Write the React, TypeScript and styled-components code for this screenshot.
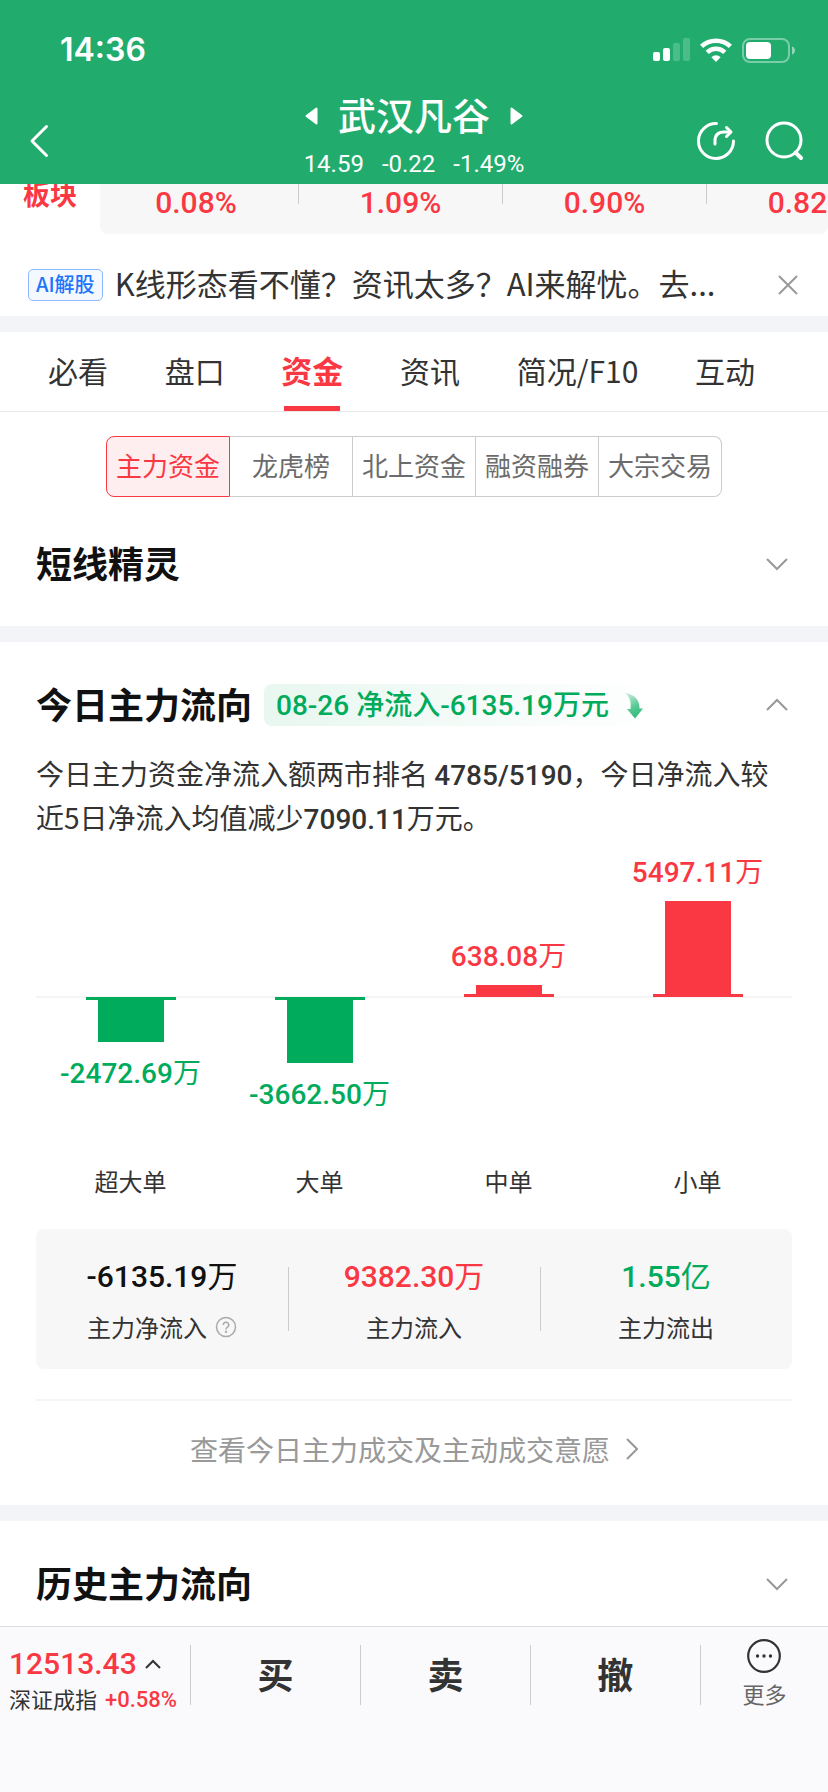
import React from "react";
import styled, { createGlobalStyle } from "styled-components";

const RED = "#fa3843";
const GREEN = "#00ab5c";
const SANS = `"Noto Sans CJK SC", sans-serif`;
const DIGITS = `Roboto, "Noto Sans CJK SC", sans-serif`;

const GlobalStyle = createGlobalStyle`
  * { box-sizing: border-box; }
  body { margin: 0; background: #fff; font-family: ${SANS}; color: #333; }
  button { margin: 0; padding: 0; border: 0; background: none; font: inherit; color: inherit; cursor: pointer; }
  h1, h2, p, dl, dd, dt, ul { margin: 0; padding: 0; font-weight: inherit; font-size: inherit; }
  a { color: inherit; text-decoration: none; }
  svg { display: block; flex: none; }
`;

const Page = styled.div`
  display: flex;
  flex-direction: column;
  min-height: 100vh;
`;

const Main = styled.main`
  flex: 1;
  background: #fff;
`;

/* header */

const Header = styled.header`
  background: #21ac6e;
  color: #fff;
`;

const StatusBar = styled.div`
  display: flex;
  align-items: center;
  justify-content: space-between;
  height: 92px;
  padding: 8px 32px 0 60px;
`;

const Clock = styled.time`
  font: 600 32px/40px Inter, sans-serif;
`;

const StatusIcons = styled.div`
  display: flex;
  align-items: center;
  gap: 10px;
`;

const NavBar = styled.nav`
  display: grid;
  grid-template-columns: 1fr auto 1fr;
  height: 92px;
`;

const NavSide = styled.div<{ $end?: boolean }>`
  display: flex;
  align-items: center;
  justify-content: ${(p) => (p.$end ? "flex-end" : "flex-start")};
  gap: 28px;
  padding: 6px 24px 0 28px;
`;

const Stock = styled.div`
  display: flex;
  flex-direction: column;
  align-items: center;
  gap: 10px;
`;

const StockTitle = styled.div`
  display: flex;
  align-items: center;
  gap: 20px;
`;

const StockName = styled.h1`
  padding-bottom: 4px;
  font-size: 38px;
  font-weight: 500;
  line-height: 44px;
`;

const Quote = styled.div`
  display: flex;
  gap: 18px;
  font: 400 24px/28px ${DIGITS};
`;

/* sector strip */

const SectorStrip = styled.section`
  display: flex;
  align-items: flex-end;
  height: 50px;
  overflow: hidden;
`;

const SectorName = styled.h2`
  flex: none;
  width: 100px;
  padding-bottom: 26px;
  text-align: center;
  font-size: 27px;
  font-weight: 700;
  line-height: 28px;
  color: ${RED};
`;

const SectorList = styled.ul`
  display: flex;
  flex: 1;
  min-width: 0;
  height: 50px;
  overflow: hidden;
  border-radius: 0 0 8px 8px;
  background: #f7f7f7;
  list-style: none;
`;

const SectorItem = styled.li`
  flex: none;
  width: 204px;
  height: 20px;
  border-left: 1px solid #ccc;
  text-align: center;
  font: 500 30px/38px ${DIGITS};
  color: ${RED};

  &:first-child {
    width: 198px;
    padding-right: 6px;
    border-left: 0;
  }
`;

/* AI tip */

const Tip = styled.section`
  display: flex;
  align-items: center;
  height: 82px;
  padding: 20px 30px 0 28px;
`;

const TipTag = styled.span`
  flex: none;
  height: 32px;
  padding: 0 7px;
  border: 1px solid #8fb8ff;
  border-radius: 5px;
  background: #f4f8ff;
  font-size: 20px;
  font-weight: 500;
  line-height: 28px;
  color: #2074fc;
`;

const TipText = styled.p`
  flex: 1;
  min-width: 0;
  margin-left: 12px;
  padding-bottom: 4px;
  font-size: 31px;
  line-height: 40px;
  white-space: nowrap;
`;

const Band = styled.div`
  height: 16px;
  background: #f3f4f8;
`;

/* tabs */

const Tabs = styled.div`
  display: flex;
  justify-content: space-between;
  height: 80px;
  padding: 0 73px 0 48px;
  border-bottom: 1px solid #e8e8e8;
`;

const Tab = styled.button<{ $active?: boolean }>`
  display: flex;
  flex-direction: column;
  align-items: center;
  justify-content: space-between;
  padding-top: 18px;
  font-size: ${(p) => (p.$active ? 31 : 30)}px;
  font-weight: ${(p) => (p.$active ? 700 : 400)};
  line-height: 40px;
  color: ${(p) => (p.$active ? RED : "#333")};

  &::after {
    content: "";
    width: 56px;
    height: 5px;
    background: ${(p) => (p.$active ? RED : "transparent")};
  }
`;

const Segments = styled.div`
  display: flex;
  margin: 24px 106px 0;
`;

const Segment = styled.button<{ $active?: boolean }>`
  flex: 1;
  height: 61px;
  padding-bottom: 4px;
  border: 1px solid ${(p) => (p.$active ? RED : "#ccc")};
  border-left-width: ${(p) => (p.$active ? 1 : 0)}px;
  background: ${(p) => (p.$active ? "#ffeeef" : "#fff")};
  font-size: 26px;
  line-height: 40px;
  white-space: nowrap;
  color: ${(p) => (p.$active ? RED : "#6b6b6b")};

  &:first-child {
    border-radius: 8px 0 0 8px;
  }
  &:last-child {
    border-radius: 0 8px 8px 0;
  }
`;

/* sections */

const Section = styled.section`
  padding: 0 36px;
`;

const SectionHead = styled.div<{ $before: number; $after: number }>`
  display: flex;
  align-items: center;
  height: 48px;
  margin: ${(p) => p.$before}px 0 ${(p) => p.$after}px;
`;

const SectionTitle = styled.h2`
  padding-bottom: 4px;
  font-size: 36px;
  font-weight: 700;
  line-height: 44px;
  color: #111;
`;

const FoldButton = styled.button`
  margin-left: auto;
  padding: 8px 4px;
`;

const FlowTag = styled.div`
  display: flex;
  align-items: center;
  gap: 16px;
  height: 42px;
  margin-left: 12px;
  padding: 2px 20px 0 12px;
  border-radius: 8px;
  background: linear-gradient(90deg, #e8f7f0, #fff);
  font: 500 28px/40px ${DIGITS};
  color: ${GREEN};
`;

const Summary = styled.p`
  font-size: 28px;
  line-height: 44px;

  b {
    font-family: ${DIGITS};
    font-weight: 500;
    line-height: 28px;
  }
`;

/* chart */

const Chart = styled.div`
  display: grid;
  grid-template-columns: repeat(4, 1fr);
  margin-top: 2px;
  background: linear-gradient(#f4f4f4, #f4f4f4) 0 155px / 100% 2px no-repeat;
`;

const Column = styled.div<{ $up: boolean }>`
  display: flex;
  flex-direction: ${(p) => (p.$up ? "column-reverse" : "column")};
  align-items: center;
  height: 156px;
  margin-top: ${(p) => (p.$up ? 0 : 156)}px;
  color: ${(p) => (p.$up ? RED : GREEN)};
`;

const BarFoot = styled.div`
  width: 90px;
  height: 3px;
  background: currentColor;
`;

const Bar = styled.div`
  width: 66px;
  background: currentColor;
`;

const BarValue = styled.div`
  margin: 16px 0 12px;
  font: 500 28px/32px ${DIGITS};
`;

const Unit = styled.span`
  font-weight: 400;
`;

const BarNames = styled.div`
  display: grid;
  grid-template-columns: repeat(4, 1fr);
  margin-top: 12px;
  text-align: center;
  font-size: 24px;
  line-height: 32px;
`;

/* totals */

const Totals = styled.dl`
  display: flex;
  height: 140px;
  margin-top: 32px;
  border-radius: 8px;
  background: #f7f7f7;
`;

const Total = styled.div`
  display: flex;
  flex: 1;
  flex-direction: column-reverse;
  align-items: center;
  justify-content: flex-end;
  gap: 14px;
  padding-top: 28px;

  & + & {
    background: linear-gradient(#ccc, #ccc) 0 38px / 1px 64px no-repeat;
  }
`;

const TotalName = styled.dt`
  display: flex;
  align-items: center;
  gap: 8px;
  font-size: 24px;
  line-height: 32px;
`;

const TotalValue = styled.dd<{ $color: string }>`
  font: 500 30px/40px ${DIGITS};
  color: ${(p) => p.$color};
`;

const MoreLink = styled.a`
  display: flex;
  align-items: center;
  justify-content: center;
  gap: 16px;
  height: 106px;
  margin-top: 30px;
  padding-bottom: 8px;
  border-top: 2px solid #f4f4f4;
  font-size: 28px;
  line-height: 40px;
  color: #999;
`;

/* bottom bar */

const BottomBar = styled.footer`
  display: flex;
  height: 166px;
  padding-top: 18px;
  border-top: 1px solid #dcdcdc;
  background: #fafafc;
`;

const IndexCell = styled.button`
  display: flex;
  flex: none;
  flex-direction: column;
  width: 190px;
  height: 70px;
  padding-left: 9px;
  text-align: left;
`;

const IndexValue = styled.span`
  display: flex;
  align-items: center;
  gap: 8px;
  font: 500 30px/38px ${DIGITS};
  color: ${RED};
`;

const IndexLine = styled.span`
  display: flex;
  gap: 8px;
  font-size: 22px;
  line-height: 30px;
  white-space: nowrap;

  b {
    font-family: ${DIGITS};
    font-weight: 500;
    line-height: 34px;
    color: ${RED};
  }
`;

const Action = styled.button`
  flex: 170;
  height: 60px;
  padding-bottom: 4px;
  border-left: 1px solid #ccc;
  font-size: 36px;
  font-weight: 700;
  line-height: 56px;
`;

const MoreAction = styled.button`
  display: flex;
  flex: 128;
  flex-direction: column;
  align-items: center;
  gap: 4px;
  height: 60px;
  border-left: 1px solid #ccc;
  font-size: 22px;
  line-height: 32px;
  color: #666;

  svg {
    margin-top: -6px;
  }
`;

const Signal = () => (
  <svg width="37" height="24" viewBox="0 0 37 24" fill="#fff">
    <rect x="0" y="14" width="7" height="9" rx="2" />
    <rect x="10" y="10" width="7" height="13" rx="2" />
    <rect x="20" y="5" width="7" height="18" rx="2" opacity="0.2" />
    <rect x="30" y="0" width="7" height="23" rx="2" opacity="0.2" />
  </svg>
);

const Wifi = () => (
  <svg width="32" height="24" viewBox="0 0 32 24" fill="none" stroke="#fff" strokeWidth="4.6">
    <path d="M1.6 8.4A21 21 0 0 1 30.4 8.4" />
    <path d="M7.2 14.4A12.6 12.6 0 0 1 24.8 14.4" />
    <path d="M16 24L11.4 19.2A6.6 6.6 0 0 1 20.6 19.2Z" fill="#fff" stroke="none" />
  </svg>
);

const Battery = () => (
  <svg width="54" height="25" viewBox="0 0 54 25">
    <rect x="1" y="1" width="46" height="23" rx="7" fill="none" stroke="#fff" strokeOpacity="0.4" strokeWidth="2" />
    <rect x="4" y="4" width="25" height="17" rx="4" fill="#fff" />
    <path d="M50 8.5C54 9.5 54 15.500 50 16.500Z" fill="#fff" fillOpacity="0.5" />
  </svg>
);

const Back = () => (
  <svg width="22" height="34" viewBox="0 0 22 34" fill="none" stroke="#fff" strokeWidth="3" strokeLinecap="round" strokeLinejoin="round">
    <path d="M18.500 2.500L4 17L18.500 31.500" />
  </svg>
);

const Triangle = ({ right }: { right?: boolean }) => (
  <svg width="13" height="18" viewBox="0 0 13 18" fill="#fff" stroke="#fff" strokeWidth="2" strokeLinejoin="round">
    <path d={right ? "M1.500 1.500V16.500L11.500 9Z" : "M11.500 1.500V16.500L1.500 9Z"} />
  </svg>
);

const Share = () => (
  <svg width="40" height="40" viewBox="0 0 40 40" fill="none" stroke="#fff" strokeWidth="3" strokeLinecap="round" strokeLinejoin="round">
    <path d="M20.500 2.500A17.500 17.500 0 1 0 37.500 20" />
    <path d="M19 23V20Q19 11 28 11H34" />
    <path d="M30.500 6.500L35 11L30.500 15.500" />
  </svg>
);

const Search = () => (
  <svg width="40" height="40" viewBox="0 0 40 40" fill="none" stroke="#fff" strokeWidth="3" strokeLinecap="round">
    <circle cx="20" cy="19" r="17" />
    <path d="M31.500 31.500L37 37" strokeWidth="4" />
  </svg>
);

const Close = () => (
  <svg width="20" height="20" viewBox="0 0 20 20" fill="none" stroke="#999" strokeWidth="2">
    <path d="M1 1L19 19M19 1L1 19" />
  </svg>
);

const Fold = ({ open }: { open?: boolean }) => (
  <svg width="22" height="14" viewBox="0 0 22 14" fill="none" stroke="#999" strokeWidth="2">
    <path d={open ? "M1 12L11 2L21 12" : "M1 2L11 12L21 2"} />
  </svg>
);

const DownArrow = () => (
  <svg width="18" height="26" viewBox="0 0 18 26">
    <defs>
      <linearGradient id="fall" x1="0" y1="0" x2="0.4" y2="1">
        <stop offset="0" stopColor="#d8f2e6" />
        <stop offset="0.6" stopColor="#5fcb98" />
        <stop offset="1" stopColor="#35bb7d" />
      </linearGradient>
    </defs>
    <path d="M0 0C9 1 15 7 14.500 15.500H18L10 25.500L2 16H5.500C6.500 9 4.500 3.500 0 0Z" fill="url(#fall)" />
  </svg>
);

const Help = () => (
  <svg width="22" height="22" viewBox="0 0 22 22" fill="none" stroke="#aaa" strokeWidth="1.500">
    <circle cx="11" cy="11" r="9.500" />
    <path d="M8.300 9A2.700 2.700 0 1 1 12.400 11.200Q11 12 11 13.500" />
    <circle cx="11" cy="15.800" r="0.500" />
  </svg>
);

const Next = () => (
  <svg width="12" height="22" viewBox="0 0 12 22" fill="none" stroke="#999" strokeWidth="2">
    <path d="M1 1L11 11L1 21" />
  </svg>
);

const Caret = () => (
  <svg width="16" height="10" viewBox="0 0 16 10" fill="none" stroke="#333" strokeWidth="2">
    <path d="M1 9L8 2L15 9" />
  </svg>
);

const Dots = () => (
  <svg width="34" height="34" viewBox="0 0 34 34" fill="#333">
    <circle cx="17" cy="17" r="15.800" fill="none" stroke="#333" strokeWidth="2.200" />
    <circle cx="10.500" cy="17" r="1.700" />
    <circle cx="17" cy="17" r="1.700" />
    <circle cx="23.500" cy="17" r="1.700" />
  </svg>
);

const sectors = ["0.08%", "1.09%", "0.90%", "0.82%"];
const tabs = ["必看", "盘口", "资金", "资讯", "简况/F10", "互动"];
const segments = ["主力资金", "龙虎榜", "北上资金", "融资融券", "大宗交易"];
const flows = [
  { name: "超大单", value: -2472.69 },
  { name: "大单", value: -3662.5 },
  { name: "中单", value: 638.08 },
  { name: "小单", value: 5497.11 },
];
const barHeight = (v: number) => Math.round((Math.abs(v) * 97) / 5497) - 2;

export default function App() {
  return (
    <Page>
      <GlobalStyle />
      <Header>
        <StatusBar>
          <Clock>14:36</Clock>
          <StatusIcons>
            <Signal />
            <Wifi />
            <Battery />
          </StatusIcons>
        </StatusBar>
        <NavBar>
          <NavSide>
            <button aria-label="返回"><Back /></button>
          </NavSide>
          <Stock>
            <StockTitle>
              <button aria-label="上一只"><Triangle /></button>
              <StockName>武汉凡谷</StockName>
              <button aria-label="下一只"><Triangle right /></button>
            </StockTitle>
            <Quote>
              <span>14.59</span>
              <span>-0.22</span>
              <span>-1.49%</span>
            </Quote>
          </Stock>
          <NavSide $end>
            <button aria-label="分享"><Share /></button>
            <button aria-label="搜索"><Search /></button>
          </NavSide>
        </NavBar>
      </Header>

      <Main>
        <SectorStrip>
          <SectorName>板块</SectorName>
          <SectorList>
            {sectors.map((s) => <SectorItem key={s}>{s}</SectorItem>)}
          </SectorList>
        </SectorStrip>

        <Tip>
          <TipTag>AI解股</TipTag>
          <TipText>K线形态看不懂？资讯太多？AI来解忧。去...</TipText>
          <button aria-label="关闭"><Close /></button>
        </Tip>
        <Band />

        <Tabs>
          {tabs.map((t) => <Tab key={t} $active={t === "资金"}>{t}</Tab>)}
        </Tabs>
        <Segments>
          {segments.map((s) => <Segment key={s} $active={s === "主力资金"}>{s}</Segment>)}
        </Segments>

        <Section>
          <SectionHead $before={43} $after={38}>
            <SectionTitle>短线精灵</SectionTitle>
            <FoldButton aria-label="展开"><Fold /></FoldButton>
          </SectionHead>
        </Section>
        <Band />

        <Section>
          <SectionHead $before={39} $after={22}>
            <SectionTitle>今日主力流向</SectionTitle>
            <FlowTag>
              08-26 净流入-6135.19万元
              <DownArrow />
            </FlowTag>
            <FoldButton aria-label="收起"><Fold open /></FoldButton>
          </SectionHead>
          <Summary>
            今日主力资金净流入额两市排名 <b>4785/5190</b>，今日净流入较近5日净流入均值减少<b>7090.11</b>万元。
          </Summary>
          <Chart>
            {flows.map((f) => (
              <Column key={f.name} $up={f.value > 0}>
                <BarFoot />
                <Bar style={{ height: barHeight(f.value) }} />
                <BarValue>{f.value.toFixed(2)}<Unit>万</Unit></BarValue>
              </Column>
            ))}
          </Chart>
          <BarNames>
            {flows.map((f) => <span key={f.name}>{f.name}</span>)}
          </BarNames>
          <Totals>
            <Total>
              <TotalName>主力净流入<Help /></TotalName>
              <TotalValue $color="#111">-6135.19<Unit>万</Unit></TotalValue>
            </Total>
            <Total>
              <TotalName>主力流入</TotalName>
              <TotalValue $color={RED}>9382.30<Unit>万</Unit></TotalValue>
            </Total>
            <Total>
              <TotalName>主力流出</TotalName>
              <TotalValue $color={GREEN}>1.55<Unit>亿</Unit></TotalValue>
            </Total>
          </Totals>
          <MoreLink href="#detail">
            查看今日主力成交及主动成交意愿
            <Next />
          </MoreLink>
        </Section>
        <Band />

        <Section>
          <SectionHead $before={39} $after={16}>
            <SectionTitle>历史主力流向</SectionTitle>
            <FoldButton aria-label="展开"><Fold /></FoldButton>
          </SectionHead>
        </Section>
      </Main>

      <BottomBar>
        <IndexCell>
          <IndexValue>12513.43<Caret /></IndexValue>
          <IndexLine>深证成指<b>+0.58%</b></IndexLine>
        </IndexCell>
        <Action>买</Action>
        <Action>卖</Action>
        <Action>撤</Action>
        <MoreAction>
          <Dots />
          更多
        </MoreAction>
      </BottomBar>
    </Page>
  );
}
